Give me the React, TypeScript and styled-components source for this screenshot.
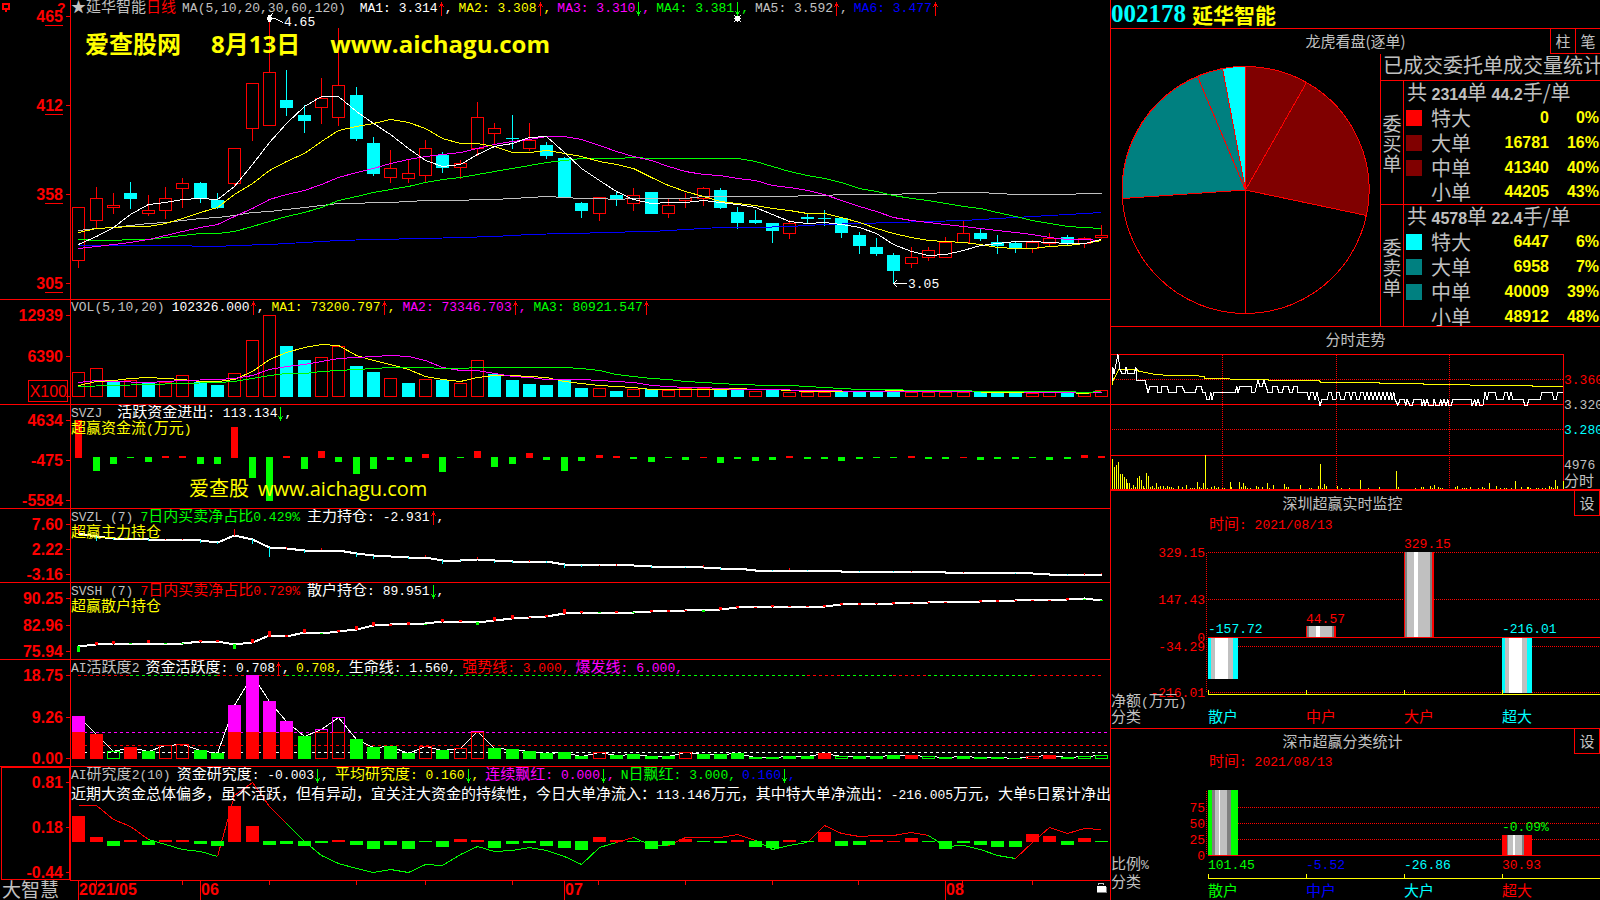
import React from 'react';
import styled, { createGlobalStyle } from 'styled-components';

const RED = '#ff0000';
const CYAN = '#00ffff';
const GREEN = '#00ff00';
const YELLOW = '#ffff00';
const MAGENTA = '#ff00ff';
const SILVER = '#c0c0c0';
const BLUE = '#0000ff';
const WHITE = '#ffffff';
const GRAY = '#808080';
const MAROON = '#800000';
const TEAL = '#008080';

const MONO = '"Liberation Mono", "Noto Sans CJK SC", monospace';
const SANS = '"Liberation Sans", "Noto Sans CJK SC", sans-serif';
const HAN = '"Noto Sans CJK SC", sans-serif';

const Global = createGlobalStyle`
  * { box-sizing: border-box; }
  html, body { margin: 0; background: #000; }
  svg { display: block; }
`;

/* ---------- layout ---------- */

const Terminal = styled.div`
  display: grid;
  grid-template-columns: minmax(0, 1fr) 490px;
  min-height: 100vh;
  overflow: hidden;
  background: #000;
  color: ${SILVER};
  font-family: ${SANS};
`;

const Charts = styled.main`
  display: flex;
  flex-direction: column;
  min-width: 0;
`;

const PanelRow = styled.section<{ $last?: boolean }>`
  display: grid;
  grid-template-columns: 71px minmax(0, 1fr);
  border-bottom: ${p => (p.$last ? 0 : 1)}px solid ${RED};
`;

const AxisCell = styled.div`
  border-right: 1px solid ${RED};
`;

const PlotCell = styled.div<{ $last?: boolean }>`
  position: relative;
  overflow: hidden;
  border-bottom: ${p => (p.$last ? 1 : 0)}px solid ${RED};
`;

const PlotSvg = styled.svg`
  width: 100%;
  shape-rendering: crispEdges;
  & * { vector-effect: non-scaling-stroke; }
`;

const CrispSvg = styled.svg`
  flex: none;
  & line, & rect, & polyline, & path { shape-rendering: crispEdges; }
`;

const Legend = styled.header`
  position: absolute;
  inset: 0 0 auto 0;
  white-space: pre;
`;

const LegendLine = styled.div<{ $gap?: number }>`
  display: flex;
  align-items: baseline;
  gap: ${p => p.$gap ?? 5}px;
  height: 16px;
  line-height: 16px;
`;

const NoteLine = styled(LegendLine)`
  color: ${YELLOW};
`;

const CommentLine = styled(LegendLine)`
  height: 22px;
  padding-top: 4px;
  color: ${WHITE};
`;

const Entry = styled.span<{ $color: string }>`
  display: inline-flex;
  align-items: baseline;
  color: ${p => p.$color};
`;

const HanText = styled.span`
  font-family: ${HAN};
  font-size: 15px;
  line-height: 12px;
`;

const MonoText = styled.span`
  font-family: ${MONO};
  font-size: 13px;
`;

const ArrowIcon = styled.svg`
  align-self: center;
  flex: none;
  shape-rendering: crispEdges;
`;

const Caption = styled.div<{ $x: number; $y: number }>`
  position: absolute;
  left: ${p => (p.$x / 1039) * 100}%;
  top: ${p => p.$y}px;
  color: ${WHITE};
  font: 13px/14px ${MONO};
`;

const Watermark = styled.div<{ $x: number; $y: number; $big?: boolean }>`
  position: absolute;
  left: ${p => p.$x}px;
  top: ${p => p.$y}px;
  display: flex;
  align-items: baseline;
  gap: ${p => (p.$big ? 30 : 9)}px;
  color: ${YELLOW};
  font-family: "Open Sans", "Noto Sans CJK SC", sans-serif;
  font-size: ${p => (p.$big ? 24 : 20)}px;
  font-weight: ${p => (p.$big ? 700 : 400)};
  line-height: 30px;
  white-space: nowrap;
`;

/* ---------- text helpers ---------- */

const split = (text: string) => text.match(/[\u2605\u3000-\uffef]+|[^\u2605\u3000-\uffef]+/g) ?? [];
const isHan = (part: string) => /[\u2605\u3000-\uffef]/.test(part);

const Mixed = ({ children }: { children: string }) => (
  <>
    {split(children).map((part, i) =>
      isHan(part) ? <HanText key={i}>{part}</HanText> : <MonoText key={i}>{part}</MonoText>,
    )}
  </>
);

type LabelProps = { x: number; y: number; color: string; end?: boolean; children: string };

const Label = ({ x, y, color, end, children }: LabelProps) => (
  <text x={x} y={y} fill={color} textAnchor={end ? 'end' : 'start'} xmlSpace="preserve">
    {split(children).map((part, i) => (
      <tspan key={i} fontFamily={isHan(part) ? HAN : MONO} fontSize={isHan(part) ? 15 : 13}>
        {part}
      </tspan>
    ))}
  </text>
);

const Arrow = ({ up }: { up?: boolean }) => (
  <ArrowIcon width="7" height="14" viewBox="0 0 7 14" fill={up ? RED : GREEN}>
    <g transform={up ? undefined : 'rotate(180 3.5 7)'}>
      <rect x="3" y="0" width="1" height="14" />
      <rect x="2" y="2" width="3" height="2" />
      <rect x="1" y="4" width="1" height="1" />
      <rect x="5" y="4" width="1" height="1" />
    </g>
  </ArrowIcon>
);

type ItemProps = { color: string; dir?: 'up' | 'down'; comma?: boolean; children: string };

const Item = ({ color, dir, comma = true, children }: ItemProps) => (
  <Entry $color={color}>
    <Mixed>{children}</Mixed>
    {dir && <Arrow up={dir === 'up'} />}
    {comma && <MonoText>,</MonoText>}
  </Entry>
);

/* ---------- plot geometry ---------- */

const dayX = (i: number) => Math.floor(78.8 + 17.34 * i);
const edge = (v: number) => Math.round(v / 3);
const mid = (v: number) => Math.floor(v / 3) + 0.5;

type Pair = [number, number];
const dense = (values: number[], from = 0): Pair[] => values.map((v, i) => [i + from, v]);
const toPoints = (pairs: Pair[]) => pairs.map(([i, v]) => `${dayX(i) + 0.5},${mid(v)}`).join(' ');

const Line = ({ data, color, width = 1 }: { data: Pair[]; color: string; width?: number }) => (
  <polyline points={toPoints(data)} fill="none" stroke={color} strokeWidth={width} />
);

type BarProps = { i: number; top: number; bottom: number; color: string; hollow?: boolean; width?: number };

const Bar = ({ i, top, bottom, color, hollow, width = 13 }: BarProps) => {
  const left = dayX(i) - (width - 1) / 2;
  return hollow ? (
    <rect x={left + 0.5} y={mid(top)} width={width - 1} height={Math.max(1, mid(bottom) - mid(top))} fill="none" stroke={color} />
  ) : (
    <rect x={left} y={edge(top)} width={width} height={Math.max(1, edge(bottom) - edge(top))} fill={color} />
  );
};

type PlotProps = { top: number; height: number; children: React.ReactNode };

const Plot = ({ top, height, children }: PlotProps) => (
  <PlotSvg height={height} viewBox={`71 ${top} 1039 ${height}`} preserveAspectRatio="none">
    {children}
  </PlotSvg>
);

type AxisProps = { height: number; labels: [number, string][]; underline?: boolean; children?: React.ReactNode };

const Axis = ({ height, labels, underline, children }: AxisProps) => (
  <AxisCell>
    <CrispSvg width="70" height={height} viewBox={`0 0 70 ${height}`}>
      {labels.map(([y, text]) => (
        <g key={text}>
          <text x="63" y={y + 6} textAnchor="end" fill={RED} fontFamily={SANS} fontSize="16" fontWeight="700">{text}</text>
          <rect x="66" y={y} width="4" height="1" fill={RED} />
          {underline && <rect x="45" y={y + 9} width="18" height="1" fill={RED} />}
        </g>
      ))}
      {children}
    </CrispSvg>
  </AxisCell>
);

/* ---------- series (levels in thirds of a pixel) ---------- */

type Candle = [string, number, number, number, number];
const candles: Candle[] = [
  ['u', 622, 622, 781, 804], ['u', 561, 595, 661, 685], ['u', 580, 616, 622, 642], ['d', 546, 579, 597, 627],
  ['u', 585, 631, 640, 648], ['u', 561, 595, 631, 657], ['u', 534, 550, 566, 624], ['d', 546, 549, 594, 609],
  ['d', 579, 600, 624, 627], ['u', 445, 445, 550, 558], ['u', 250, 250, 385, 423], ['u', 67, 217, 376, 376],
  ['d', 210, 300, 324, 348], ['d', 316, 345, 363, 399], ['u', 234, 295, 322, 372], ['u', 84, 256, 352, 378],
  ['d', 261, 285, 417, 423], ['d', 411, 429, 522, 528], ['u', 450, 505, 532, 549], ['u', 480, 520, 535, 549],
  ['u', 420, 445, 526, 549], ['d', 456, 465, 504, 519], ['u', 480, 490, 502, 537], ['u', 306, 352, 445, 468],
  ['u', 369, 385, 400, 432], ['d', 345, 414, 417, 447], ['u', 369, 421, 445, 453], ['d', 426, 435, 468, 477],
  ['d', 471, 474, 592, 592], ['d', 606, 609, 633, 654], ['u', 592, 592, 640, 663], ['d', 575, 585, 598, 618],
  ['u', 564, 586, 610, 633], ['d', 576, 576, 642, 642], ['u', 597, 616, 640, 654], ['u', 580, 595, 601, 624],
  ['u', 561, 565, 595, 618], ['d', 564, 570, 624, 627], ['d', 621, 636, 669, 687], ['d', 630, 660, 669, 672],
  ['d', 669, 669, 693, 729], ['u', 661, 670, 700, 717], ['d', 640, 651, 657, 669], ['d', 630, 654, 657, 678],
  ['d', 652, 654, 699, 714], ['d', 696, 705, 738, 762], ['d', 714, 741, 762, 768], ['d', 759, 765, 813, 850],
  ['u', 741, 772, 790, 804], ['u', 741, 751, 772, 783], ['u', 711, 727, 772, 774], ['u', 663, 700, 727, 727],
  ['d', 687, 699, 717, 723], ['d', 705, 727, 738, 762], ['d', 725, 729, 745, 759], ['u', 720, 727, 745, 759],
  ['u', 699, 715, 730, 738], ['d', 706, 711, 732, 738], ['u', 711, 715, 730, 744], ['u', 675, 706, 712, 717],
];

const ma1 = dense([734, 710, 682, 643, 614, 606, 599, 595, 598, 560, 492, 427, 370, 319, 290, 290, 333, 371, 402, 444,
  480, 498, 492, 462, 438, 430, 413, 409, 458, 505, 542, 573, 598, 610, 607, 607, 601, 607, 613, 622,
  643, 664, 670, 667, 674, 682, 700, 732, 754, 766, 763, 751, 735, 729, 724, 724, 726, 731, 729, 718]);
const ma2 = dense([697, 686, 682, 679, 679, 670, 655, 637, 621, 584, 549, 510, 484, 459, 424, 391, 380, 371, 358, 366,
  386, 415, 430, 431, 440, 457, 457, 452, 460, 470, 483, 492, 505, 532, 556, 573, 589, 604, 611, 616,
  625, 631, 640, 640, 652, 667, 684, 700, 713, 721, 724, 728, 733, 741, 745, 745, 740, 735, 729, 721]);
const ma3 = dense([745, 740, 734, 728, 718, 706, 694, 682, 673, 650, 625, 598, 583, 571, 553, 532, 517, 505, 490, 478,
  470, 463, 457, 445, 433, 424, 417, 409, 409, 418, 436, 454, 469, 481, 498, 514, 523, 526, 535, 541,
  555, 562, 571, 583, 600, 619, 635, 652, 661, 667, 673, 680, 686, 691, 698, 704, 712, 717, 718, 721]);
const ma4 = dense([718, 721, 721, 718, 718, 713, 706, 700, 700, 693, 680, 663, 649, 637, 622, 601, 589, 577, 568, 559,
  546, 539, 532, 523, 514, 505, 496, 487, 481, 475, 475, 475, 472, 475, 475, 475, 475, 475, 475, 484,
  498, 513, 526, 534, 547, 565, 574, 585, 595, 601, 611, 619, 625, 637, 649, 660, 669, 679, 682, 685]);
const ma5 = dense([691, 685, 682, 676, 670, 667, 661, 655, 652, 647, 638, 634, 628, 622, 616, 610, 610, 607, 606, 604,
  602, 601, 600, 598, 598, 595, 592, 589, 592, 595, 595, 598, 595, 595, 595, 594, 590, 589, 589, 589,
  589, 588, 586, 585, 583, 583, 583, 583, 581, 579, 577, 577, 577, 580, 583, 583, 583, 583, 580, 580]);
const ma6: Pair[] = [[0, 736], [6, 737], [7, 739], [8, 739], [9, 736], [11, 734], [13, 728], [15, 722], [17, 719],
  [20, 716], [22, 713], [24, 710], [26, 703], [28, 700], [29, 700], [30, 697], [33, 694], [35, 688], [37, 682],
  [39, 682], [41, 679], [43, 674], [45, 671], [47, 667], [49, 665], [51, 661], [53, 655], [55, 650], [57, 643], [59, 637]];

const volume = ('u232 u220 d260 u256 d264 u262 u241 d262 d270 u235 u136 u61 d153 d195 u187 u154 d213 d231 u250 d264 ' +
  'u253 d255 u265 u196 d237 d255 d267 d270 d255 d279 u280 d288 u283 d282 u286 u280 u280 d284 d285 u289 ' +
  'd285 u291 u292 u291 d290 d290 d291 d291 u291 u292 u292 u291 d291 d293 d293 u295 u293 d293 u296 u286').split(' ');

const vol1: Pair[] = [...dense([271, 260, 256, 250, 247, 250, 253, 259, 258, 253, 229, 194, 172, 158, 148, 152, 181, 196,
  208, 223, 243, 252, 259, 248, 241, 241, 244, 247, 258, 264, 270, 273, 277, 283]), [37, 283], [38, 281], [39, 283],
  [40, 284], [41, 287], [42, 289], [46, 289], [47, 286], [49, 287], [51, 289], [53, 292], [57, 291], [58, 295], [59, 290]];
const vol2: Pair[] = [[0, 262], [1, 256], [2, 259], [4, 262], [6, 256], [8, 253], [9, 249], [10, 241], [11, 223], [12, 214],
  [13, 208], [14, 200], [15, 191], [16, 187], [17, 184], [18, 181], [19, 184], [20, 196], [21, 216], [22, 226], [23, 226],
  [24, 234], [25, 243], [26, 247], [27, 253], [29, 253], [30, 256], [31, 259], [32, 262], [33, 271], [34, 274], [35, 277],
  [36, 277], [37, 280], [38, 283], [40, 283], [42, 286], [46, 288], [54, 289], [55, 291], [59, 292]];
const vol3: Pair[] = [[0, 274], [2, 270], [4, 267], [6, 265], [8, 262], [9, 259], [10, 251], [11, 241], [12, 236], [13, 234],
  [14, 229], [15, 226], [16, 223], [17, 220], [18, 217], [20, 217], [21, 220], [22, 220], [23, 217], [28, 217], [29, 220],
  [30, 227], [31, 238], [32, 244], [33, 249], [34, 253], [35, 259], [36, 262], [37, 265], [38, 268], [40, 270], [41, 271],
  [42, 274], [43, 277], [44, 281], [45, 283], [50, 286], [53, 288], [57, 290], [58, 292], [59, 290]];

const funds = ('r376 g528 g507 g489 g501 r483 r483 g507 g507 r396 g549 g618 r483 g522 r468 g501 g537 g522 g495 g501 ' +
  'r477 g531 g489 r468 g516 g507 r474 g495 g528 g498 r480 r483 g492 g501 g489 g495 r486 g504 g492 g498 ' +
  'g495 r483 g492 g492 g498 g492 g489 g489 r483 g492 g492 r486 g495 g492 g492 g489 g495 g492 r480 r483').split(' ');

const mainHold: Pair[] = [...dense([716, 725, 729, 731, 733, 733, 734, 737, 742, 721, 734, 758, 759, 765, 765, 766, 774, 782,
  785, 787, 786, 795, 796, 792, 797, 799, 798, 799, 809]), [32, 810], [33, 813], [35, 815], [36, 816], [37, 819],
  [38, 820], [39, 825], [43, 826], [44, 828], [49, 829], [50, 831], [52, 833], [55, 835], [56, 837], [59, 837]];
const mainTicks: [number, number, number, string][] = [
  [0, 690, 716, RED], [1, 722, 738, CYAN], [2, 728, 734, CYAN], [4, 732, 738, CYAN], [5, 732, 735, RED], [6, 732, 735, RED],
  [7, 735, 744, CYAN], [8, 740, 747, CYAN], [9, 702, 722, RED], [10, 732, 747, CYAN], [11, 757, 786, CYAN], [12, 756, 762, RED],
  [13, 765, 774, CYAN], [14, 759, 765, RED], [16, 774, 786, CYAN], [17, 782, 792, CYAN], [19, 786, 792, CYAN], [20, 780, 786, RED],
  [21, 795, 807, CYAN], [22, 795, 798, CYAN], [23, 786, 792, RED], [24, 797, 804, CYAN], [25, 799, 805, CYAN], [26, 795, 801, RED],
  [27, 799, 804, CYAN], [28, 808, 819, CYAN], [29, 810, 816, CYAN], [30, 810, 813, RED], [31, 806, 813, RED], [33, 813, 819, CYAN],
  [35, 816, 819, CYAN], [36, 810, 816, RED], [37, 819, 825, CYAN], [40, 825, 828, CYAN], [41, 819, 825, RED], [42, 825, 828, CYAN],
  [45, 828, 831, CYAN], [47, 828, 831, CYAN], [48, 828, 831, RED], [51, 831, 834, RED], [54, 834, 837, CYAN], [57, 837, 840, CYAN],
  [58, 834, 840, RED], [59, 834, 837, RED],
];

const retailHold: Pair[] = [...dense([199, 194, 190, 189, 189, 189, 189, 183, 183, 193, 187, 167, 168, 158, 159, 155, 148, 135,
  134, 131, 131, 124, 124, 127, 121, 114, 111, 108, 100, 97]), [32, 96], [33, 93], [35, 91], [37, 89], [38, 82], [40, 79],
  [43, 78], [44, 72], [46, 71], [47, 69], [49, 68], [52, 64], [54, 61], [57, 59], [58, 56], [59, 60]];
const retailTicks: [number, number, number, string][] = [
  [0, 198, 216, GREEN], [1, 186, 195, RED], [2, 183, 192, RED], [3, 189, 192, GREEN], [4, 180, 189, RED], [5, 189, 192, GREEN],
  [6, 189, 192, GREEN], [7, 180, 186, RED], [8, 180, 186, RED], [9, 192, 207, GREEN], [10, 177, 189, RED], [11, 153, 171, RED],
  [12, 165, 171, RED], [13, 147, 159, RED], [14, 159, 162, GREEN], [15, 150, 156, RED], [16, 138, 150, RED], [17, 126, 138, RED],
  [18, 132, 138, RED], [19, 126, 135, RED], [20, 132, 135, GREEN], [21, 117, 126, RED], [22, 120, 126, RED], [23, 126, 135, GREEN],
  [24, 111, 123, RED], [25, 105, 117, RED], [26, 111, 114, RED], [27, 105, 111, RED], [28, 87, 102, RED], [29, 93, 99, RED],
  [30, 96, 99, GREEN], [31, 93, 99, RED], [32, 96, 99, GREEN], [33, 90, 96, RED], [34, 90, 96, RED], [35, 90, 93, RED],
  [36, 90, 96, GREEN], [37, 81, 90, RED], [38, 78, 84, RED], [39, 81, 84, RED], [40, 75, 81, RED], [41, 78, 81, RED],
  [42, 78, 81, RED], [43, 75, 81, RED], [44, 69, 75, RED], [45, 69, 75, RED], [46, 69, 72, RED], [47, 66, 72, RED],
  [48, 69, 72, RED], [49, 66, 69, RED], [50, 66, 69, RED], [52, 60, 66, RED], [53, 60, 66, RED], [54, 60, 63, RED],
  [55, 60, 63, RED], [56, 60, 63, RED], [57, 54, 60, RED], [58, 57, 60, GREEN], [59, 60, 63, GREEN],
];

/* r/g filled, R/G outlined; levels above the burst line get a magenta cap */
const activity = ('r408 r462 G514 r501 g513 R497 R492 g510 g519 r375 r285 r363 r423 g468 R448 R412 g477 g501 g498 g519 ' +
  'R499 g510 R505 R454 g504 g507 g513 g519 g516 g528 R517 g525 g522 g528 g528 R517 g522 g522 g519 g531 ' +
  'g531 g528 g528 r519 G529 g528 g528 g525 r525 G529 g531 g528 g531 g531 g534 R529 r525 g531 G529 G526').split(' ');

const trendRuns: [number, number, string][] = [
  [0, 3, RED], [3, 8, GREEN], [8, 12, RED], [12, 42, GREEN], [42, 44, RED], [44, 47, GREEN], [47, 49, RED], [49, 55, GREEN], [55, 59, RED],
];

const research = ('r708 r771 g798 r780 g795 r780 r780 g792 g798 r678 r738 g795 g792 g798 g789 r780 g795 g807 g795 g807 ' +
  'g786 g801 r777 r780 g804 g792 g789 g798 g804 g810 r771 r780 g786 g807 g795 r777 g786 g789 r780 g801 ' +
  'g804 r780 g786 r756 g798 g795 r780 r783 r774 g786 g807 g789 g795 g801 g801 r762 r768 g795 r774 g786').split(' ');
const researchLine = [676, 676, 717, 738, 778, 793, 807, 814, 829, 645, 607, 678, 730, 783, 825, 851, 865, 877, 868, 877,
  853, 856, 822, 799, 814, 811, 802, 810, 829, 853, 802, 786, 772, 796, 796, 772, 772, 772, 763, 782,
  807, 795, 787, 736, 760, 769, 766, 766, 757, 767, 799, 796, 808, 826, 835, 787, 742, 760, 745, 748];
const researchRuns: [number, number, string][] = [
  [0, 4, RED], [4, 8, GREEN], [8, 12, RED], [12, 31, GREEN], [31, 32, RED], [32, 34, GREEN], [34, 39, RED],
  [39, 42, GREEN], [42, 49, RED], [49, 54, GREEN], [54, 59, RED],
];

/* ---------- left panels ---------- */

const PricePanel = () => (
  <PanelRow>
    <Axis height={299} underline labels={[[16, '465'], [105, '412'], [194, '358'], [283, '305']]}>
      <path d="M2.5 3.5h6v5h-6z M5.5 8v4" fill="none" stroke={RED} strokeWidth="2" />
      <text x="57" y="13" fill={RED} fontFamily={SANS} fontSize="14" fontWeight="700">?</text>
    </Axis>
    <PlotCell>
      <Plot top={0} height={299}>
        {candles.map(([kind, high, top, bottom, low], i) => {
          const color = kind === 'u' ? RED : CYAN;
          const x = dayX(i);
          return (
            <g key={i}>
              <rect x={x} y={edge(high)} width="1" height={Math.max(0, edge(top) - edge(high))} fill={color} />
              <rect x={x} y={edge(bottom)} width="1" height={Math.max(0, edge(low) - edge(bottom))} fill={color} />
              <Bar i={i} top={top} bottom={bottom} color={color} hollow={kind === 'u'} />
            </g>
          );
        })}
        <Line data={ma6} color={BLUE} />
        <Line data={ma5} color={SILVER} />
        <Line data={ma4} color={GREEN} />
        <Line data={ma3} color={MAGENTA} />
        <Line data={ma2} color={YELLOW} />
        <Line data={ma1} color={WHITE} />
        <path d="M267 17h5v3h-5z M268 15h3v7h-3z" fill={WHITE} />
        <path d="M269.5 18.5h5l9 4 M270.5 16.5l2-3" fill="none" stroke={WHITE} />
        <path d="M735 16h5v5h-5z M734 15h1v1h-1z M740 15h1v1h-1z M734 21h1v1h-1z M740 21h1v1h-1z M737 15h1v7h-1z M734 18h7v1h-7z" fill={WHITE} />
        <path d="M894 283.5h13 M897 280l-3.500 3.500l3.500 3.500" fill="none" stroke={WHITE} />
      </Plot>
      <Legend>
        <LegendLine $gap={6}>
          <Entry $color={SILVER}>
            <Mixed>★延华智能</Mixed>
            <Entry $color={RED}><Mixed>日线</Mixed></Entry>
          </Entry>
          <Entry $color={SILVER}><Mixed>MA(5,10,20,30,60,120)</Mixed></Entry>
          <Item color={WHITE} dir="up"> MA1: 3.314</Item>
          <Item color={YELLOW} dir="up">MA2: 3.308</Item>
          <Item color={MAGENTA} dir="down">MA3: 3.310</Item>
          <Item color={GREEN} dir="down">MA4: 3.381</Item>
          <Item color={SILVER} dir="up">MA5: 3.592</Item>
          <Item color={BLUE} dir="up" comma={false}>MA6: 3.477</Item>
        </LegendLine>
      </Legend>
      <Watermark $x={14} $y={29} $big>
        <span>爱查股网</span><span>8月13日</span><span>www.aichagu.com</span>
      </Watermark>
      <Caption $x={213} $y={16}>4.65</Caption>
      <Caption $x={837} $y={278}>3.05</Caption>
    </PlotCell>
  </PanelRow>
);

const VolumePanel = () => (
  <PanelRow>
    <Axis height={104} labels={[[15, '12939'], [56, '6390']]}>
      <rect x="28.5" y="80.5" width="39" height="21" fill="none" stroke={RED} />
      <text x="67" y="97" textAnchor="end" fill={RED} fontFamily={SANS} fontSize="16">X100</text>
      <rect x="66" y="96" width="4" height="1" fill={RED} />
    </Axis>
    <PlotCell>
      <Plot top={5} height={104}>
        {volume.map((v, i) => (
          <Bar key={i} i={i} top={Number(v.slice(1))} bottom={v[0] === 'u' ? 304 : 306} color={v[0] === 'u' ? RED : CYAN} hollow={v[0] === 'u'} />
        ))}
        <Line data={vol1} color={YELLOW} />
        <Line data={vol2} color={MAGENTA} />
        <Line data={vol3} color={GREEN} />
      </Plot>
      <Legend>
        <LegendLine $gap={7}>
          <Entry $color={SILVER}><Mixed>VOL(5,10,20)</Mixed></Entry>
          <Item color={WHITE} dir="up">102326.000</Item>
          <Item color={YELLOW} dir="up">MA1: 73200.797</Item>
          <Item color={MAGENTA} dir="up">MA2: 73346.703</Item>
          <Item color={GREEN} dir="up" comma={false}>MA3: 80921.547</Item>
        </LegendLine>
      </Legend>
    </PlotCell>
  </PanelRow>
);

const FundsPanel = () => (
  <PanelRow>
    <Axis height={103} labels={[[15, '4634'], [55, '-475'], [95, '-5584']]} />
    <PlotCell>
      <Plot top={110} height={103}>
        {funds.map((v, i) => {
          const level = Number(v.slice(1));
          return v[0] === 'r'
            ? <Bar key={i} i={i} top={level} bottom={489} color={RED} width={7} />
            : <Bar key={i} i={i} top={486} bottom={level} color={GREEN} width={7} />;
        })}
      </Plot>
      <Legend>
        <LegendLine $gap={15}>
          <Entry $color={SILVER}><Mixed>SVZJ</Mixed></Entry>
          <Item color={WHITE} dir="down">活跃资金进出: 113.134</Item>
        </LegendLine>
        <NoteLine><Entry $color={YELLOW}><Mixed>超赢资金流(万元)</Mixed></Entry></NoteLine>
      </Legend>
      <Watermark $x={118} $y={69}>
        <span>爱查股</span><span>www.aichagu.com</span>
      </Watermark>
    </PlotCell>
  </PanelRow>
);

const MainHoldPanel = () => (
  <PanelRow>
    <Axis height={73} labels={[[15, '7.60'], [40, '2.22'], [65, '-3.16']]} />
    <PlotCell>
      <Plot top={214} height={73}>
        <Line data={mainHold} color={WHITE} width={2} />
        {mainTicks.map(([i, top, bottom, color]) => <Bar key={i} i={i} top={top} bottom={bottom} color={color} width={1} />)}
      </Plot>
      <Legend>
        <LegendLine $gap={7}>
          <Entry $color={SILVER}><Mixed>SVZL (7)</Mixed></Entry>
          <Item color={GREEN} comma={false}>7日内买卖净占比0.429%</Item>
          <Item color={WHITE} dir="up">主力持仓: -2.931</Item>
        </LegendLine>
        <NoteLine><Entry $color={YELLOW}><Mixed>超赢主力持仓</Mixed></Entry></NoteLine>
      </Legend>
    </PlotCell>
  </PanelRow>
);

const RetailHoldPanel = () => (
  <PanelRow>
    <Axis height={76} labels={[[15, '90.25'], [42, '82.96'], [68, '75.94']]} />
    <PlotCell>
      <Plot top={3} height={76}>
        <Line data={retailHold} color={WHITE} width={2} />
        {retailTicks.map(([i, top, bottom, color]) => <Bar key={i} i={i} top={top} bottom={bottom} color={color} width={3} />)}
      </Plot>
      <Legend>
        <LegendLine $gap={7}>
          <Entry $color={SILVER}><Mixed>SVSH (7)</Mixed></Entry>
          <Item color={RED} comma={false}>7日内买卖净占比0.729%</Item>
          <Item color={WHITE} dir="down">散户持仓: 89.951</Item>
        </LegendLine>
        <NoteLine><Entry $color={YELLOW}><Mixed>超赢散户持仓</Mixed></Entry></NoteLine>
      </Legend>
    </PlotCell>
  </PanelRow>
);

const BURST = 456;

const ActivityPanel = () => (
  <PanelRow>
    <Axis height={106} labels={[[15, '18.75'], [57, '9.26'], [98, '0.00']]} />
    <PlotCell>
      <Plot top={80} height={106}>
        {trendRuns.map(([a, b, color]) => (
          <line key={a} x1={dayX(a)} x2={dayX(b)} y1="95.5" y2="95.5" stroke={color} strokeDasharray="3 3" />
        ))}
        <line x1="78" x2="1108" y1="152.5" y2="152.5" stroke={MAGENTA} strokeDasharray="3 3" />
        <line x1="78" x2="1108" y1="165.5" y2="165.5" stroke={RED} strokeDasharray="3 3" />
        <line x1="78" x2="1108" y1="172.5" y2="172.5" stroke={WHITE} strokeDasharray="3 3" />
        <Line data={dense(activity.map(v => Number(v.slice(1))))} color={WHITE} />
        {activity.map((v, i) => {
          const level = Number(v.slice(1));
          const hollow = v[0] === 'R' || v[0] === 'G';
          const color = v[0].toLowerCase() === 'r' ? RED : GREEN;
          const capped = color === RED && level < BURST;
          return (
            <g key={i}>
              {capped && <Bar i={i} top={level} bottom={BURST} color={MAGENTA} hollow={hollow} />}
              <Bar i={i} top={capped ? BURST : level} bottom={hollow ? 535 : 537} color={color} hollow={hollow} />
            </g>
          );
        })}
      </Plot>
      <Legend>
        <LegendLine $gap={6}>
          <Entry $color={SILVER}><Mixed>AI活跃度2</Mixed></Entry>
          <Item color={WHITE} dir="up">资金活跃度: 0.708</Item>
          <Item color={YELLOW}>0.708</Item>
          <Item color={WHITE}>生命线: 1.560</Item>
          <Item color={RED}>强势线: 3.000</Item>
          <Item color={MAGENTA}>爆发线: 6.000</Item>
        </LegendLine>
      </Legend>
    </PlotCell>
  </PanelRow>
);

const ResearchPanel = () => (
  <PanelRow $last>
    <Axis height={114} labels={[[15, '0.81'], [60, '0.18'], [105, '-0.44']]}>
      <rect x="1.5" y="0.5" width="68" height="112" fill="none" stroke={RED} />
    </Axis>
    <PlotCell $last>
      <Plot top={187} height={113}>
        {researchRuns.map(([a, b, color]) => (
          <Line key={a} data={dense(researchLine.slice(a, b + 1), a)} color={color} />
        ))}
        {research.map((v, i) => {
          const level = Number(v.slice(1));
          return v[0] === 'r'
            ? <Bar key={i} i={i} top={Math.min(level, 783)} bottom={786} color={RED} />
            : <Bar key={i} i={i} top={783} bottom={level} color={GREEN} />;
        })}
      </Plot>
      <Legend>
        <LegendLine $gap={6}>
          <Entry $color={SILVER}><Mixed>AI研究度2(10)</Mixed></Entry>
          <Item color={WHITE} dir="down">资金研究度: -0.003</Item>
          <Item color={YELLOW} dir="down">平均研究度: 0.160</Item>
          <Item color={MAGENTA} dir="down">连续飘红: 0.000</Item>
          <Item color={GREEN}>N日飘红: 3.000</Item>
          <Item color={BLUE} dir="down">0.160</Item>
        </LegendLine>
        <CommentLine>
          <Entry $color={WHITE}>
            <Mixed>近期大资金总体偏多，虽不活跃，但有异动，宜关注大资金的持续性，今日大单净流入：113.146万元，其中特大单净流出：-216.005万元，大单5日累计净出</Mixed>
          </Entry>
        </CommentLine>
      </Legend>
    </PlotCell>
  </PanelRow>
);

/* ---------- time line at the bottom ---------- */

const Timeline = styled.footer`
  display: grid;
  grid-template-columns: 71px minmax(0, 1fr);
  height: 19px;
`;

const Brand = styled.div`
  padding-left: 2px;
  font: 19px/16px ${HAN};
  white-space: nowrap;
`;

const Months = styled.div`
  position: relative;
  display: grid;
  grid-template-columns: 7fr 122fr 364fr 381fr 165fr;
`;

const Month = styled.span`
  border-left: 1px solid ${RED};
  color: ${RED};
  font: 700 16px/18px ${SANS};
  &:first-child { border: 0; }
`;

const TickOverlay = styled(PlotSvg)`
  position: absolute;
  inset: 0;
`;

const weekTicks = [96, 182, 269, 356, 425, 512, 598, 685, 772, 858, 962, 1032];

const Footer = () => (
  <Timeline>
    <Brand>大智慧</Brand>
    <Months>
      <Month />
      <Month>2021/05</Month>
      <Month>06</Month>
      <Month>07</Month>
      <Month>08</Month>
      <TickOverlay height="19" viewBox="71 0 1039 19" preserveAspectRatio="none">
        {weekTicks.map(x => <rect key={x} x={x} y="0" width="1" height="4" fill={RED} />)}
        <path d="M1098.500 4v-1.500h5v1.500" fill="none" stroke={SILVER} />
        <rect x="1097" y="5" width="9" height="6" fill={WHITE} />
        <path d="M1097 11.500h9.500v-5.500" fill="none" stroke={GRAY} />
      </TickOverlay>
    </Months>
  </Timeline>
);

/* ---------- right column ---------- */

const Side = styled.aside`
  display: flex;
  flex-direction: column;
  min-width: 0;
  overflow: hidden;
  border-left: 1px solid ${RED};
`;

const StockHeader = styled.h1`
  display: flex;
  align-items: center;
  gap: 6px;
  height: 29px;
  margin: 0;
  border-bottom: 1px solid ${RED};
  color: ${YELLOW};
  font: 700 21px/28px ${HAN};
`;

const Code = styled.span`
  color: ${CYAN};
  font: 700 25px/28px "Liberation Serif", serif;
`;

const Box = styled.section<{ $line?: number }>`
  border-bottom: ${p => p.$line ?? 1}px solid ${RED};
  overflow: hidden;
`;

const BoxHead = styled.div<{ $lead?: number }>`
  display: flex;
  padding-left: ${p => p.$lead ?? 0}px;
  height: 25px;
`;

const BoxTitle = styled.h2`
  flex: 1;
  margin: 0;
  color: ${SILVER};
  font: 400 15px/23px ${HAN};
  text-align: center;
`;

const HeadButton = styled.button`
  width: 25px;
  height: 25px;
  padding: 0;
  border: solid ${RED};
  border-width: 0 0 1px 1px;
  background: #000;
  color: ${SILVER};
  font: 15px/20px ${HAN};
`;

const SetButton = styled(HeadButton)`
  width: 26px;
  border-right-width: 1px;
`;

const OrderBody = styled.div`
  display: flex;
  height: 272px;
`;

const OrderStats = styled.div`
  flex: 1;
  min-width: 0;
  overflow: hidden;
  border-left: 1px solid ${RED};
`;

const StatsTitle = styled.h3`
  height: 27px;
  margin: 0;
  padding-left: 2px;
  border-bottom: 1px solid ${RED};
  color: ${SILVER};
  font: 400 20px/22px ${HAN};
  white-space: nowrap;
`;

const OrderTable = styled.table`
  table-layout: fixed;
  width: 100%;
  border-collapse: separate;
  border-spacing: 0;
  white-space: nowrap;
  td, th { padding: 0; font-weight: 400; }
`;

const SideCell = styled.th`
  border-right: 1px solid ${RED};
  color: ${SILVER};
  font: 19px/20px ${HAN};
  white-space: normal;
  text-align: center;
`;

const Group = styled.tbody`
  tr { height: 25px; }
  tr:first-child { height: 24px; }
  &:not(:last-child) ${SideCell}, &:not(:last-child) tr:last-child > * { border-bottom: 1px solid ${RED}; }
`;

const SummaryCell = styled.td`
  color: ${SILVER};
  font: 20px/20px ${HAN};
  text-align: left;
  text-indent: 3px;
`;

const Digits = styled.span`
  font: 700 16px/20px ${SANS};
`;

const Swatch = styled.i<{ $color: string }>`
  display: block;
  width: 16px;
  height: 16px;
  margin-left: 2px;
  background: ${p => p.$color};
`;

const SizeCell = styled.th`
  color: ${SILVER};
  font: 20px/20px ${HAN};
  text-align: left;
`;

const NumberCell = styled.td`
  color: ${YELLOW};
  font: 16px/20px ${SANS};
  text-align: right;
  && { padding-right: 1px; font-weight: 700; }
`;

type OrderRow = [string, string, string, string];
type OrderGroupData = { side: string; count: string; average: string; rows: OrderRow[] };

const orders: OrderGroupData[] = [
  { side: '委买单', count: '2314', average: '44.2', rows: [
    [RED, '特大', '0', '0%'], [MAROON, '大单', '16781', '16%'], [MAROON, '中单', '41340', '40%'], ['transparent', '小单', '44205', '43%'] ] },
  { side: '委卖单', count: '4578', average: '22.4', rows: [
    [CYAN, '特大', '6447', '6%'], [TEAL, '大单', '6958', '7%'], [TEAL, '中单', '40009', '39%'], ['transparent', '小单', '48912', '48%'] ] },
];

const SideCol = styled.col`width: 23px;`;
const SwatchCol = styled.col`width: 27px;`;
const SizeCol = styled.col`width: 44px;`;
const CountCol = styled.col`width: 75px;`;

const OrderBox = () => (
  <Box>
    <BoxHead $lead={50}>
      <BoxTitle>龙虎看盘(逐单)</BoxTitle>
      <HeadButton type="button">柱</HeadButton>
      <HeadButton type="button">笔</HeadButton>
    </BoxHead>
    <OrderBody>
      <CrispSvg width="269" height="272" viewBox="1111 54 269 272">
        <g stroke={RED} strokeWidth="1">
          <circle cx="1245.500" cy="190" r="123.500" fill="#000" shapeRendering="crispEdges" />
          <path d="M1245.500 190V66.500A123.500 123.500 0 0 1 1306.500 82.500Z" fill={MAROON} />
          <path d="M1245.500 190L1306.500 82.500A123.500 123.500 0 0 1 1366.500 215.500Z" fill={MAROON} />
          <path d="M1245.500 190V313.500" />
          <path d="M1245.500 190L1122.500 198.500A123.500 123.500 0 0 1 1197.500 76.500Z" fill={TEAL} />
          <path d="M1245.500 190L1197.500 76.500A123.500 123.500 0 0 1 1222.500 68.500Z" fill={TEAL} />
          <path d="M1245.500 190L1222.500 68.500A123.500 123.500 0 0 1 1245.500 66.500Z" fill={CYAN} />
        </g>
      </CrispSvg>
      <OrderStats>
        <StatsTitle>已成交委托单成交量统计</StatsTitle>
        <OrderTable>
          <colgroup>
            <SideCol /><SwatchCol /><SizeCol /><CountCol /><col />
          </colgroup>
          {orders.map(group => (
            <Group key={group.side}>
              <tr>
                <SideCell rowSpan={5} scope="rowgroup">{group.side}</SideCell>
                <SummaryCell colSpan={4}>
                  共 <Digits>{group.count}</Digits>单 <Digits>{group.average}</Digits>手/单
                </SummaryCell>
              </tr>
              {group.rows.map(([color, size, count, share]) => (
                <tr key={size}>
                  <td><Swatch $color={color} /></td>
                  <SizeCell scope="row">{size}</SizeCell>
                  <NumberCell>{count}</NumberCell>
                  <NumberCell>{share}</NumberCell>
                </tr>
              ))}
            </Group>
          ))}
        </OrderTable>
      </OrderStats>
    </OrderBody>
  </Box>
);

/* intraday: x and level in thirds of a pixel from the chart origin */
const sx = (u: number) => 1100 + Math.round(u / 3);
const sy = (v: number) => 325 + mid(v);
const intraday = (pairs: Pair[]) => pairs.map(([u, v]) => `${sx(u)},${sy(v)}`).join(' ');

const averageLine: Pair[] = [[35, 182], [38, 165], [58, 132], [110, 133], [118, 138], [140, 142], [148, 146], [170, 148], [208, 151],
  [282, 152], [312, 155], [316, 160], [388, 161], [392, 163], [505, 164], [508, 166], [656, 167], [662, 172], [836, 173],
  [838, 175], [968, 175], [970, 178], [1108, 179], [1112, 181], [1295, 182], [1298, 184], [1388, 184]];
const priceLine: Pair[] = [[35, 170], [38, 128], [42, 145], [48, 118], [54, 88], [60, 132], [66, 145], [74, 145], [79, 128],
  [83, 145], [102, 145], [107, 128], [112, 165], [134, 166], [145, 202], [151, 184], [170, 184], [175, 202], [182, 202], [187, 184],
  [202, 184], [208, 202], [228, 202], [232, 184], [247, 184], [254, 202], [285, 202], [290, 184], [304, 184], [309, 202], [316, 202],
  [322, 222], [327, 222], [333, 202], [337, 222], [343, 202], [404, 202], [410, 184], [415, 202], [421, 184], [452, 184], [457, 202],
  [464, 202], [475, 166], [481, 184], [487, 184], [493, 166], [499, 184], [504, 202], [515, 202], [520, 184], [532, 184], [538, 202],
  [545, 202], [553, 184], [565, 184], [570, 202], [576, 202], [583, 184], [590, 184], [595, 202], [620, 202], [628, 222], [634, 202],
  [640, 202], [646, 222], [652, 202], [660, 240], [666, 222], [680, 222], [686, 202], [692, 202], [698, 222], [707, 222], [712, 202],
  [718, 202], [723, 222], [732, 222], [737, 202], [748, 202], [754, 222], [760, 202], [766, 202], [770, 222], [776, 222], [782, 202],
  [788, 202], [794, 222], [800, 202], [806, 222], [812, 202], [818, 222], [824, 202], [830, 222], [836, 202], [842, 222], [848, 202],
  [854, 222], [860, 202], [866, 222], [872, 202], [877, 222], [881, 202], [886, 222], [895, 240], [901, 222], [913, 222], [917, 240],
  [922, 222], [929, 240], [935, 240], [941, 222], [962, 222], [967, 240], [971, 222], [975, 240], [981, 222], [988, 240], [999, 240],
  [1003, 222], [1007, 240], [1017, 240], [1022, 222], [1027, 240], [1033, 222], [1038, 240], [1043, 222], [1048, 240], [1054, 240],
  [1060, 222], [1112, 222], [1117, 240], [1124, 222], [1128, 240], [1134, 222], [1140, 240], [1150, 240], [1156, 202], [1161, 222],
  [1168, 202], [1184, 202], [1190, 222], [1208, 222], [1214, 202], [1221, 202], [1226, 222], [1234, 202], [1240, 222], [1270, 222],
  [1276, 240], [1282, 240], [1286, 222], [1320, 222], [1327, 202], [1355, 202], [1361, 222], [1368, 222], [1374, 202], [1388, 202]];
const tickVolume: Pair[] = [[37, 402], [43, 426], [49, 420], [55, 411], [61, 447], [67, 447], [73, 456], [79, 462], [82, 474], [88, 474],
  [94, 489], [100, 480], [106, 486], [112, 459], [118, 453], [124, 465], [130, 483], [133, 489], [139, 444], [145, 453], [151, 486],
  [157, 483], [163, 489], [169, 474], [175, 486], [181, 483], [190, 483], [196, 489], [202, 483], [208, 486], [214, 486], [220, 489],
  [235, 483], [247, 486], [259, 480], [271, 489], [277, 489], [283, 489], [292, 471], [298, 486], [304, 489], [310, 474], [316, 390],
  [322, 489], [334, 486], [343, 483], [349, 489], [355, 486], [367, 489], [373, 489], [391, 471], [394, 486], [418, 471], [424, 486],
  [430, 474], [436, 483], [442, 489], [451, 489], [469, 483], [475, 486], [487, 486], [502, 474], [508, 489], [520, 480], [553, 477],
  [559, 486], [565, 486], [601, 480], [628, 489], [634, 489], [655, 483], [661, 417], [667, 489], [673, 477], [679, 483], [712, 483],
  [724, 489], [748, 489], [781, 465], [805, 489], [838, 486], [889, 438], [895, 486], [946, 489], [964, 486], [970, 486], [991, 483],
  [997, 489], [1003, 480], [1015, 486], [1021, 489], [1027, 489], [1066, 486], [1072, 483], [1087, 489], [1093, 489], [1099, 489],
  [1111, 486], [1135, 489], [1147, 486], [1153, 489], [1168, 474], [1189, 483], [1201, 489], [1213, 489], [1219, 489], [1234, 489],
  [1246, 468], [1264, 486], [1282, 486], [1285, 486], [1291, 489], [1309, 489], [1315, 489], [1327, 489], [1336, 489], [1348, 483],
  [1354, 486], [1360, 489], [1366, 465], [1372, 483], [1390, 468]];

const IntradayBox = () => (
  <Box $line={2}>
    <BoxHead><BoxTitle>分时走势</BoxTitle></BoxHead>
    <CrispSvg width="489" height="137" viewBox="1111 352 489 137">
      <g fill="none" stroke={RED}>
        <path d="M1111 354.500h452.500v135 M1111 404.500h452 M1111 455.500h452" />
        <path d="M1112 379.500h451 M1112 429.500h451 M1222.500 355v134 M1336.500 355v134 M1449.500 355v134" strokeDasharray="1 1" />
      </g>
      {tickVolume.map(([u, v], i) => (
        <rect key={i} x={1100 + Math.floor(u / 3)} y={325 + edge(v)} width="1" height={164 - edge(v)} fill={YELLOW} />
      ))}
      <polyline points={intraday(averageLine)} fill="none" stroke={YELLOW} />
      <polyline points={intraday(priceLine)} fill="none" stroke={WHITE} />
      <Label x={1564} y={384} color={RED}>3.360</Label>
      <Label x={1564} y={409} color={SILVER}>3.320</Label>
      <Label x={1564} y={434} color={CYAN}>3.280</Label>
      <Label x={1564} y={469} color={SILVER}>4976</Label>
      <Label x={1564} y={486} color={SILVER}>分时</Label>
    </CrispSvg>
  </Box>
);

type Stripe = [number, string];

const Cylinder = ({ x, y, height, stripes }: { x: number; y: number; height: number; stripes: Stripe[] }) => (
  <g>
    {stripes.map(([from, color], i) => {
      const to = stripes[i + 1]?.[0] ?? 30;
      return <rect key={from} x={x + from} y={y} width={to - from} height={height} fill={color} />;
    })}
  </g>
);

const cyanStripes: Stripe[] = [[0, CYAN], [3, SILVER], [7, WHITE], [20, SILVER], [25, CYAN]];
const redStripes: Stripe[] = [[0, RED], [1, GRAY], [3, SILVER], [10, WHITE], [14, SILVER], [26, GRAY], [28, RED]];
const greenStripes: Stripe[] = [[0, GREEN], [4, GRAY], [7, SILVER], [11, WHITE], [12, SILVER], [19, GRAY], [23, GREEN]];
const wideRedStripes: Stripe[] = [[0, RED], [5, GRAY], [6, SILVER], [11, WHITE], [13, SILVER], [20, GRAY], [22, RED]];

const columns = [1208, 1306, 1404, 1502];

const MonitorBox = () => (
  <Box>
    <BoxHead>
      <BoxTitle>深圳超赢实时监控</BoxTitle>
      <SetButton type="button">设</SetButton>
    </BoxHead>
    <CrispSvg width="489" height="212" viewBox="1111 516 489 212">
      <Label x={1209} y={529} color={RED}>时间: 2021/08/13</Label>
      <path d="M1208 552.500h392 M1208 599.500h392 M1208 646.500h392 M1208 692.500h392 M1206.500 553v140" fill="none" stroke={RED} strokeDasharray="1 1" />
      <Cylinder x={1208} y={638} height={41} stripes={cyanStripes} />
      <Cylinder x={1306} y={626} height={11} stripes={redStripes} />
      <Cylinder x={1404} y={552} height={85} stripes={redStripes} />
      <Cylinder x={1502} y={638} height={55} stripes={cyanStripes} />
      <path d="M1208 637.500h392" stroke={RED} />
      <path d={`M1208 694.500h392 ${columns.map(x => `M${x + 0.5} 690v4`).join(' ')}`} stroke={YELLOW} />
      <Label x={1205} y={557} color={RED} end>329.15</Label>
      <Label x={1205} y={604} color={RED} end>147.43</Label>
      <Label x={1205} y={642} color={RED} end>0</Label>
      <Label x={1205} y={651} color={RED} end>-34.29</Label>
      <Label x={1205} y={697} color={RED} end>-216.01</Label>
      <Label x={1208} y={633} color={CYAN}>-157.72</Label>
      <Label x={1306} y={623} color={RED}>44.57</Label>
      <Label x={1404} y={548} color={RED}>329.15</Label>
      <Label x={1502} y={633} color={CYAN}>-216.01</Label>
      <Label x={1111} y={706} color={SILVER}>净额(万元)</Label>
      <Label x={1111} y={722} color={SILVER}>分类</Label>
      <Label x={1208} y={722} color={CYAN}>散户</Label>
      <Label x={1306} y={722} color={RED}>中户</Label>
      <Label x={1404} y={722} color={RED}>大户</Label>
      <Label x={1502} y={722} color={CYAN}>超大</Label>
    </CrispSvg>
  </Box>
);

const CategoryBox = () => (
  <Box $line={0}>
    <BoxHead>
      <BoxTitle>深市超赢分类统计</BoxTitle>
      <SetButton type="button">设</SetButton>
    </BoxHead>
    <CrispSvg width="489" height="146" viewBox="1111 754 489 146">
      <Label x={1209} y={766} color={RED}>时间: 2021/08/13</Label>
      <path d="M1208 807.500h392 M1208 823.500h392 M1208 839.500h392 M1206.500 791v64" fill="none" stroke={RED} strokeDasharray="1 1" />
      <Cylinder x={1208} y={790} height={65} stripes={greenStripes} />
      <Cylinder x={1502} y={835} height={20} stripes={wideRedStripes} />
      <path d="M1208 855.500h392" stroke={RED} />
      <path d={`M1208 878.500h392 ${columns.map(x => `M${x + 0.5} 874v4`).join(' ')}`} stroke={YELLOW} />
      <Label x={1205} y={812} color={RED} end>75</Label>
      <Label x={1205} y={828} color={RED} end>50</Label>
      <Label x={1205} y={844} color={RED} end>25</Label>
      <Label x={1205} y={860} color={RED} end>0</Label>
      <Label x={1502} y={831} color={GREEN}>-0.09%</Label>
      <Label x={1208} y={869} color={GREEN}>101.45</Label>
      <Label x={1306} y={869} color={BLUE}>-5.52</Label>
      <Label x={1404} y={869} color={CYAN}>-26.86</Label>
      <Label x={1502} y={869} color={RED}>30.93</Label>
      <Label x={1111} y={869} color={SILVER}>比例%</Label>
      <Label x={1111} y={887} color={SILVER}>分类</Label>
      <Label x={1208} y={896} color={GREEN}>散户</Label>
      <Label x={1306} y={896} color={BLUE}>中户</Label>
      <Label x={1404} y={896} color={CYAN}>大户</Label>
      <Label x={1502} y={896} color={RED}>超大</Label>
    </CrispSvg>
  </Box>
);

export default function App() {
  return (
    <>
      <Global />
      <Terminal>
        <Charts>
          <PricePanel />
          <VolumePanel />
          <FundsPanel />
          <MainHoldPanel />
          <RetailHoldPanel />
          <ActivityPanel />
          <ResearchPanel />
          <Footer />
        </Charts>
        <Side>
          <StockHeader><Code>002178</Code>延华智能</StockHeader>
          <OrderBox />
          <IntradayBox />
          <MonitorBox />
          <CategoryBox />
        </Side>
      </Terminal>
    </>
  );
}
